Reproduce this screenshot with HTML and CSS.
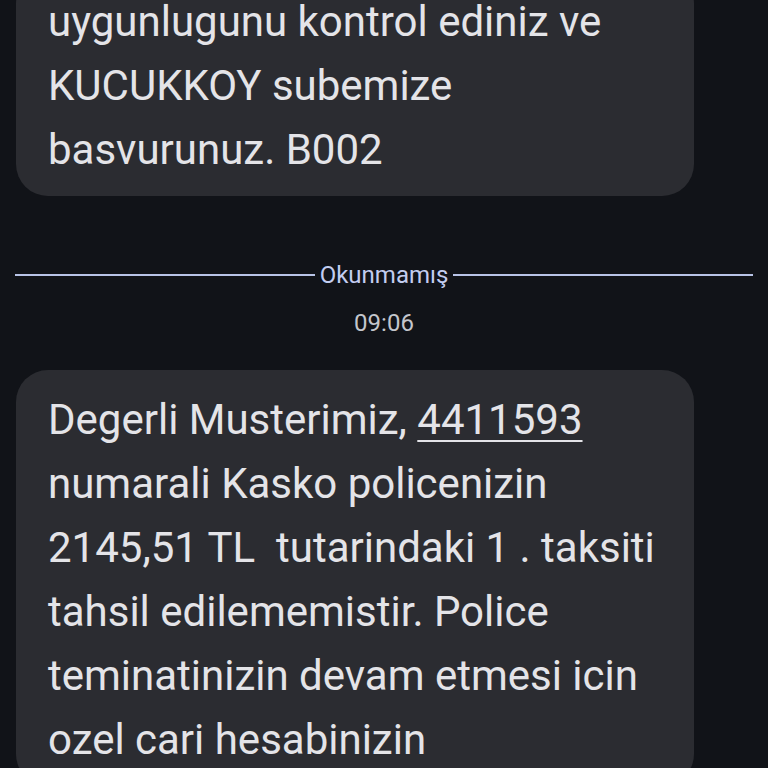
FILE: index.html
```html
<!DOCTYPE html>
<html lang="tr">
<head>
    <meta charset="UTF-8">
    <meta name="viewport" content="width=device-width, initial-scale=1.0">
    <title>Mesajlar</title>
    <link rel="stylesheet" href="styles.css">
</head>
<body>

<div class="thread">
    <!-- onceki mesaj (ust kismi ekranin disinda) -->
    <div class="bubble bubble-first">
        uygunlugunu kontrol ediniz ve KUCUKKOY subemize basvurunuz. B002
    </div>

    <!-- okunmamis ayirici -->
    <div class="unread">
        <span class="unread-line"></span>
        <span class="unread-label">Okunmamış</span>
        <span class="unread-line"></span>
    </div>

    <div class="timestamp">09:06</div>

    <div class="bubble">
        Degerli Musterimiz, <span class="link">4411593</span> numarali Kasko policenizin 2145,51 TL&nbsp; tutarindaki 1 . taksiti tahsil edilememistir. Police teminatinizin devam etmesi icin ozel cari hesabinizin
    </div>
</div>

</body>
</html>
```

FILE: styles.css
```css
body {
    margin: 0;
    background-color: #111318;
    font-family: Roboto, "Noto Sans", sans-serif;
    color: #e4e4e8;
    overflow: hidden;
}
.thread {
    padding: 0 16px;
}
/* mesaj balonu */
.bubble {
    width: 614px;
    padding: 18px 32px 14px 32px;
    background-color: #2b2c31;
    border-radius: 32px;
    font-size: 42px;
    line-height: 64px;
}
.bubble-first {
    margin-top: -28px;
}
.link {
    text-decoration: underline;
    text-decoration-thickness: 2px;
    text-underline-offset: 6px;
}
/* okunmamis ayirici */
.unread {
    display: flex;
    align-items: center;
    gap: 5px;
    margin: 65px -1px 0 -1px;
    color: #c3cdf0;
    font-size: 24px;
    line-height: 28px;
}
.unread-line {
    flex: 1;
    height: 2px;
    background-color: #b8c3e6;
}
.timestamp {
    text-align: center;
    margin-top: 20px;
    margin-bottom: 33px;
    color: #c4c6cc;
    font-size: 24px;
    line-height: 28px;
}
```
